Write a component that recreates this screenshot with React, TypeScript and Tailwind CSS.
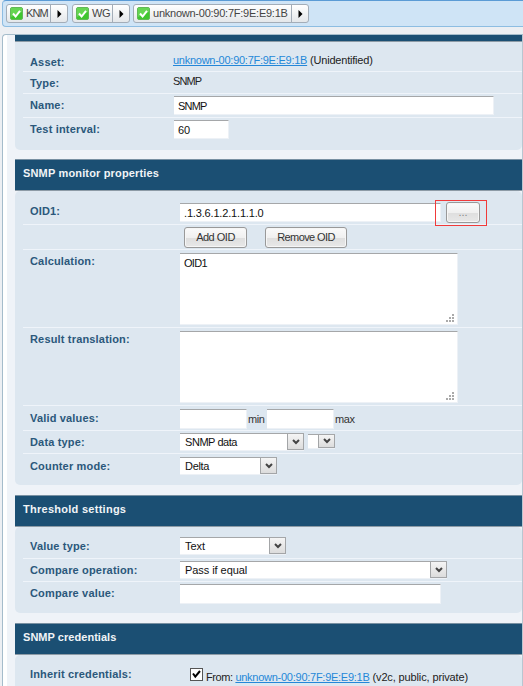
import type { ReactNode } from "react";

function Crumb({ label, text, className }: { label: string; text: string; className: string }) {
  return (
    <div
      className={`flex h-[19px] shrink-0 items-center rounded-[3px] border border-[#a3adb8] bg-gradient-to-b from-white to-[#e4e7ea] ${className}`}
    >
      <svg className="ml-[3px] shrink-0" width="13" height="13" viewBox="0 0 13 13">
        <rect x="0.5" y="0.5" width="12" height="12" rx="1.5" fill="#3fc62f" stroke="#62b957" />
        <path d="M1 1h11v4L1 10z" fill="#7fe06b" opacity="0.6" />
        <path d="M3 6.5l2.6 3L10 3.8" fill="none" stroke="#fff" strokeWidth="2" />
      </svg>
      <span className={`ml-[3px] flex-1 whitespace-nowrap text-[11px] leading-[17px] text-[#444] ${text}`}>{label}</span>
      <span className="flex h-full w-[17px] shrink-0 items-center justify-center border-l border-[#a3adb8]">
        <svg width="5" height="8" viewBox="0 0 5 8">
          <path d="M0.5 0L4.5 4L0.5 8z" fill="#000" />
        </svg>
      </span>
    </div>
  );
}

function Header({ title, text }: { title: string; text: string }) {
  return (
    <div
      className={`h-[32px] shrink-0 border-t border-b border-t-[#7890a2] border-b-[#8d9ba6] bg-[#1b4f73] text-[11px] leading-[27px] font-bold text-[#f0f4f7] ${text}`}
    >
      {title}
    </div>
  );
}

function Row({
  label,
  height,
  labelPad,
  valuePad,
  last = false,
  children,
}: {
  label?: string;
  height: string;
  labelPad: string;
  valuePad: string;
  last?: boolean;
  children: ReactNode;
}) {
  return (
    <div className={`ml-[8px] flex shrink-0 items-start ${last ? "" : "border-b border-[#eff4fa]"} ${height}`}>
      <div
        className={`w-[151px] shrink-0 pl-[7px] text-[11px] leading-[14px] font-bold tracking-[0.17px] whitespace-nowrap text-[#2b587b] ${labelPad}`}
      >
        {label}
      </div>
      <div className={`flex min-w-0 items-start whitespace-nowrap ${valuePad}`}>{children}</div>
    </div>
  );
}

function Field({ value, className }: { value?: string; className: string }) {
  return (
    <div
      className={`shrink-0 border-t border-r border-b border-t-[#a5a7a9] border-r-[#edf1f6] border-b-[#edf1f6] bg-white text-[11px] leading-[18px] text-[#111] ${className}`}
    >
      {value}
    </div>
  );
}

function TextArea({ value, className }: { value?: string; className: string }) {
  return (
    <div
      className={`flex w-[278px] shrink-0 items-end border-t border-r border-b border-t-[#a5a7a9] border-r-[#edf1f6] border-b-[#edf1f6] bg-white text-[11px] text-[#111] ${className}`}
    >
      <span className="flex-1 self-start pl-[4px] leading-[18px] tracking-[-0.7px]">{value}</span>
      <svg className="mr-[2px] mb-[1px]" width="9" height="9" viewBox="0 0 9 9" fill="#aaa">
        <path d="M6 0h2v2H6zM3 3h2v2H3zM6 3h2v2H6zM0 6h2v2H0zM3 6h2v2H3zM6 6h2v2H6z" />
      </svg>
    </div>
  );
}

function Select({ value, text = "", className }: { value?: string; text?: string; className: string }) {
  return (
    <div
      className={`flex shrink-0 border-t border-b border-t-[#a5a7a9] border-b-[#edf1f6] bg-white text-[11px] text-[#111] ${className}`}
    >
      <span className={`flex-1 pl-[5px] leading-[17px] ${text}`}>{value}</span>
      <span className="flex w-[17px] items-center justify-center border-r border-b border-l border-[#a3a5a7] bg-gradient-to-b from-[#f5f5f5] to-[#dcdcdc]">
        <svg width="8" height="6" viewBox="0 0 8 6">
          <path d="M1 1l3 3 3-3" fill="none" stroke="#444" strokeWidth="2" />
        </svg>
      </span>
    </div>
  );
}

function Button({ label, className }: { label: string; className: string }) {
  return (
    <div
      className={`flex h-[21px] shrink-0 items-center justify-center rounded-[3px] border border-[#999] bg-[linear-gradient(#fafafa_0%,#f0f0f0_50%,#dedede_51%,#e8e8e8_100%)] text-[11px] shadow-[inset_0_0_0_1px_#f6f6f6] ${className}`}
    >
      {label}
    </div>
  );
}

function HostLink() {
  return <span className="tracking-[-0.26px] text-[#2487d8] underline">unknown-00:90:7F:9E:E9:1B</span>;
}

export default function App() {
  return (
    <div className="flex h-[686px] w-[523px] flex-col overflow-hidden bg-[#eceff3] font-['Liberation_Sans',Arial,sans-serif]">
      <div className="ml-[2px] flex h-[27px] shrink-0 items-start rounded-l-[4px] border-t border-b border-l border-t-[#5b9bd5] border-b-[#8dbde2] border-l-[#8dbde2] bg-[#cfe4f6] pt-[3px] pl-[3px]">
        <Crumb label="KNM" text="tracking-[-0.9px]" className="w-[62px]" />
        <Crumb label="WG" text="tracking-[-0.5px]" className="ml-[4px] w-[58px]" />
        <Crumb label="unknown-00:90:7F:9E:E9:1B" text="tracking-[-0.24px]" className="ml-[3px] w-[176px]" />
      </div>

      <div className="mt-[7px] ml-[2px] flex min-h-0 flex-1 rounded-tl-[4px] border-t border-l border-[#a5bccb] bg-white pl-[4px]">
        <div className="flex w-[515px] shrink-0 flex-col bg-[#eff3f8] pl-[8px]">
          <div className="h-[7px] shrink-0 border-b border-b-[#8d9ba6] bg-[#1b4f73]" />
          <div className="flex h-[108px] shrink-0 flex-col rounded-b-[5px] bg-[#dde7f0]">
            <Row label="Asset:" height="h-[30px]" labelPad="pt-[13px]" valuePad="pt-[11px] -ml-px">
              <span className="text-[11px] leading-[14px] tracking-[-0.2px] text-[#222]">
                <HostLink /> (Unidentified)
              </span>
            </Row>
            <Row label="Type:" height="h-[22px]" labelPad="pt-[4px]" valuePad="pt-[2px] -ml-px">
              <span className="text-[11px] leading-[14px] tracking-[-0.9px] text-[#222]">SNMP</span>
            </Row>
            <Row label="Name:" height="h-[24px]" labelPad="pt-[4px]" valuePad="pt-[2px]">
              <Field value="SNMP" className="h-[19px] w-[320px] pl-[4px] tracking-[-0.8px]" />
            </Row>
            <Row label="Test interval:" height="h-[32px]" labelPad="pt-[4px]" valuePad="pt-[2px]" last>
              <Field value="60" className="h-[19px] w-[55px] pl-[4px]" />
            </Row>
          </div>

          <div className="h-[9px] shrink-0" />
          <Header title="SNMP monitor properties" text="pl-[8px] tracking-[0.16px]" />
          <div className="flex h-[294px] shrink-0 flex-col rounded-[5px] bg-[#dde7f0]">
            <Row label="OID1:" height="h-[34px]" labelPad="pt-[13px]" valuePad="pt-[12px] pl-[6px]">
              <Field value=".1.3.6.1.2.1.1.1.0" className="h-[19px] w-[261px] pl-[4px] tracking-[-0.17px]" />
              <div className="relative ml-[5px]">
                <Button label="..." className="-mt-px w-[34px] text-[#888]" />
                <div className="absolute -top-[3px] -left-[11px] h-[26px] w-[52px] border border-[#f03a3a]" />
              </div>
            </Row>
            <Row height="h-[25px]" labelPad="" valuePad="pt-[2px] pl-[10px]">
              <Button label="Add OID" className="w-[63px] tracking-[-0.5px] text-[#333]" />
              <Button label="Remove OID" className="ml-[18px] w-[82px] tracking-[-0.6px] text-[#333]" />
            </Row>
            <Row label="Calculation:" height="h-[78px]" labelPad="pt-[4px]" valuePad="pt-[3px] pl-[6px]">
              <TextArea value="OID1" className="h-[72px]" />
            </Row>
            <Row label="Result translation:" height="h-[78px]" labelPad="pt-[4px]" valuePad="pt-[3px] pl-[6px]">
              <TextArea className="h-[72px]" />
            </Row>
            <Row label="Valid values:" height="h-[25px]" labelPad="pt-[5px]" valuePad="pt-[3px] pl-[6px]">
              <Field className="h-[20px] w-[67px]" />
              <span className="ml-[1px] w-[19px] pt-[3px] text-[11px] leading-[14px] tracking-[-0.4px] text-[#333]">min</span>
              <Field className="h-[20px] w-[67px]" />
              <span className="ml-[1px] pt-[3px] text-[11px] leading-[14px] tracking-[-0.4px] text-[#333]">max</span>
            </Row>
            <Row label="Data type:" height="h-[23px]" labelPad="pt-[4px]" valuePad="pt-[2px] pl-[6px]">
              <Select value="SNMP data" text="tracking-[-0.45px]" className="h-[18px] w-[124px]" />
              <Select className="mt-[1px] ml-[4px] h-[15px] w-[27px]" />
            </Row>
            <Row label="Counter mode:" height="h-[31px]" labelPad="pt-[5px]" valuePad="pt-[3px] pl-[6px]" last>
              <Select value="Delta" text="tracking-[-0.3px]" className="h-[18px] w-[97px]" />
            </Row>
          </div>

          <div className="h-[10px] shrink-0" />
          <Header title="Threshold settings" text="pl-[8px] tracking-[0.27px]" />
          <div className="flex h-[86px] shrink-0 flex-col rounded-[5px] bg-[#dde7f0]">
            <Row label="Value type:" height="h-[32px]" labelPad="pt-[12px]" valuePad="pt-[10px] pl-[6px]">
              <Select value="Text" className="h-[18px] w-[106px]" />
            </Row>
            <Row label="Compare operation:" height="h-[23px]" labelPad="pt-[4px]" valuePad="pt-[2px] pl-[6px]">
              <Select value="Pass if equal" text="tracking-[-0.06px]" className="h-[18px] w-[267px]" />
            </Row>
            <Row label="Compare value:" height="h-[31px]" labelPad="pt-[4px]" valuePad="pt-[2px] pl-[6px]" last>
              <Field className="h-[20px] w-[261px]" />
            </Row>
          </div>

          <div className="h-[10px] shrink-0" />
          <Header title="SNMP credentials" text="pl-[8px] tracking-[0.04px]" />
          <div className="flex h-[40px] shrink-0 flex-col rounded-t-[5px] bg-[#dde7f0]">
            <Row label="Inherit credentials:" height="h-[40px]" labelPad="pt-[12px]" valuePad="pt-[13px] pl-[16px]" last>
              <svg className="mr-[3px]" width="13" height="13" viewBox="0 0 13 13">
                <rect x="0.5" y="0.5" width="12" height="12" fill="#fff" stroke="#555" />
                <path d="M3 5.5l2.3 3.2L10 3" fill="none" stroke="#000" strokeWidth="2" />
              </svg>
              <span className="pt-[2px] text-[11px] leading-[14px] tracking-[-0.13px] text-[#222]">
                <span className="tracking-[-0.4px]">From: </span>
                <HostLink /> (v2c, public, private)
              </span>
            </Row>
          </div>
        </div>
        <div className="w-px shrink-0 bg-[#b9c6d1]" />
      </div>
    </div>
  );
}
